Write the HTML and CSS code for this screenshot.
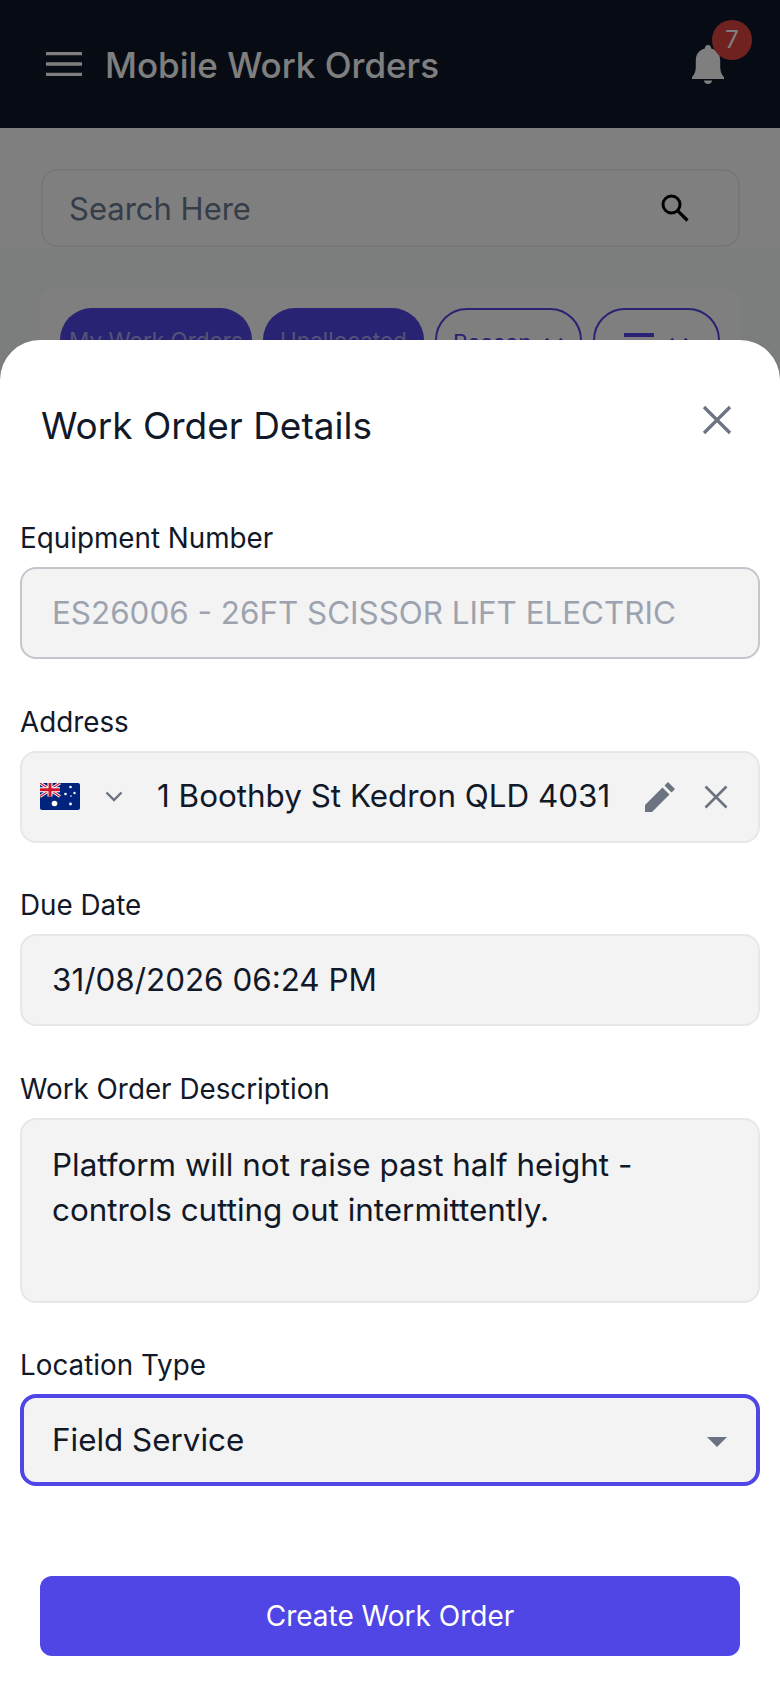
FILE: index.html
```html
<!DOCTYPE html>
<html lang="en">
<head>
<meta charset="utf-8">
<title>Mobile Work Orders</title>
<link rel="stylesheet" href="styles.css">
</head>
<body>
<div class="page">
  <header class="topbar">
    <div class="brand">
      <svg class="menu-icon" viewBox="0 0 36 24" width="36" height="24"><path d="M0 1.500h36M0 12h36M0 22.500h36" stroke="#fff" stroke-width="3.400" fill="none"/></svg>
      <span class="brand-title">Mobile Work Orders</span>
    </div>
    <div class="bell">
      <svg class="bell-icon" viewBox="0 0 32 39" width="32" height="39"><path d="M16 0c-2 0-3.200 1.500-3.200 3.600C6.600 5 3.800 9.800 3.800 16v6c0 4.500-1.600 7.800-3.800 10.200V34h32v-1.800c-2.200-2.400-3.800-5.700-3.800-10.200v-6c0-6.200-2.800-11-9-12.400C19.200 1.500 18 0 16 0zM12 35.500h8c0 2-1.800 3.500-4 3.500s-4-1.500-4-3.500z" fill="#fff"/></svg>
      <span class="badge">7</span>
    </div>
  </header>
  <section class="search-band">
    <div class="search-box">
      <span class="search-text">Search Here</span>
      <svg class="search-icon" viewBox="0 0 28 28" width="28" height="28"><circle cx="10.500" cy="10.500" r="8.500" fill="none" stroke="#000" stroke-width="3"/><path d="M16.800 16.800L26.500 26.500" stroke="#000" stroke-width="3.200" fill="none"/></svg>
    </div>
  </section>
  <section class="content">
    <div class="chip-card">
      <span class="chip chip-solid chip-a">My Work Orders</span>
      <span class="chip chip-solid chip-b">Unallocated</span>
      <span class="chip chip-line chip-c">Reason
        <svg viewBox="0 0 20 14" width="20" height="14"><path d="M2 2l8 9 8-9" fill="none" stroke="currentColor" stroke-width="3.500"/></svg>
      </span>
      <span class="chip chip-line chip-d">
        <span class="chip-bar"></span>
        <svg viewBox="0 0 20 14" width="20" height="14"><path d="M2 2l8 9 8-9" fill="none" stroke="currentColor" stroke-width="3.500"/></svg>
      </span>
    </div>
  </section>
</div>

<div class="scrim"></div>

<section class="sheet">
  <div class="sheet-head">
    <h1 class="sheet-title">Work Order Details</h1>
    <svg class="sheet-close" viewBox="0 0 30 30" width="30" height="30"><path d="M2 2l26 26M28 2L2 28" stroke="#6b7280" stroke-width="3.200" fill="none"/></svg>
  </div>
  <form class="form">
    <div class="field">
      <label class="label">Equipment Number</label>
      <div class="control control-disabled">ES26006 - 26FT SCISSOR LIFT ELECTRIC</div>
    </div>
    <div class="field">
      <label class="label">Address</label>
      <div class="control control-address">
        <svg class="flag" viewBox="0 0 40 27" width="40" height="27">
          <rect width="40" height="27" rx="2" fill="#00247d"/>
          <path d="M0 0l20 13.500M20 0L0 13.500" stroke="#fff" stroke-width="3"/>
          <path d="M0 0l20 13.500M20 0L0 13.500" stroke="#cf142b" stroke-width="1.200"/>
          <path d="M10 0v13.500M0 6.750h20" stroke="#fff" stroke-width="5"/>
          <path d="M10 0v13.500M0 6.750h20" stroke="#cf142b" stroke-width="3"/>
          <circle cx="14.500" cy="20.500" r="2.800" fill="#fff"/>
          <circle cx="30.500" cy="4" r="1.300" fill="#fff"/>
          <circle cx="25.500" cy="11" r="1.300" fill="#fff"/>
          <circle cx="34.500" cy="10" r="1.200" fill="#fff"/>
          <circle cx="30.500" cy="21" r="1.400" fill="#fff"/>
          <circle cx="31" cy="13" r=".8" fill="#fff"/>
        </svg>
        <svg class="chev" viewBox="0 0 18 11" width="18" height="11"><path d="M1.500 1.500L9 9l7.500-7.500" fill="none" stroke="#6b7280" stroke-width="2.400"/></svg>
        <span class="address-text">1 Boothby St Kedron QLD 4031</span>
        <svg class="pencil" viewBox="0 0 30 30" width="30" height="30"><path d="M0 30v-7L17.500 5.500l7 7L7 30zM19.500 3.500L23 0l7 7-3.500 3.500z" fill="#6b7280"/></svg>
        <svg class="clear" viewBox="0 0 24 24" width="24" height="24"><path d="M1.500 1.500l21 21M22.500 1.500l-21 21" stroke="#6b7280" stroke-width="2.600" fill="none"/></svg>
      </div>
    </div>
    <div class="field">
      <label class="label">Due Date</label>
      <div class="control">31/08/2026 06:24 PM</div>
    </div>
    <div class="field">
      <label class="label">Work Order Description</label>
      <div class="control control-area">Platform will not raise past half height -<br>controls cutting out intermittently.</div>
    </div>
    <div class="field">
      <label class="label">Location Type</label>
      <div class="control control-focus">
        <span>Field Service</span>
        <svg class="caret" viewBox="0 0 20 10" width="20" height="10"><path d="M0 0h20L10 10z" fill="#6b7280"/></svg>
      </div>
    </div>
  </form>
  <div class="sheet-foot">
    <button class="submit" type="button">Create Work Order</button>
  </div>
</section>
</body>
</html>
```
FILE: styles.css
```css
* { box-sizing: border-box; }
html, body { margin: 0; height: 100%; }
body {
  position: relative;
  width: 780px;
  height: 1688px;
  overflow: hidden;
  font-family: Inter, "Liberation Sans", sans-serif;
  color: #111827;
  background: #f9fafb;
}
.page { display: flex; flex-direction: column; height: 100%; }

.topbar {
  height: 128px;
  flex: none;
  background: #0f1829;
  color: #fff;
  display: flex;
  align-items: center;
  justify-content: space-between;
  padding: 0 28px 0 46px;
}
.brand { display: flex; align-items: center; gap: 23px; }
.menu-icon { display: block; }
.brand-title { font-size: 35px; font-weight: 500; line-height: 44px; margin-top: 2px; }
.bell { position: relative; width: 60px; height: 84px; align-self: flex-start; }
.bell-icon { position: absolute; left: 0; top: 45px; }
.badge {
  position: absolute;
  left: 20px;
  top: 20px;
  width: 40px;
  height: 40px;
  border-radius: 50%;
  background: #de4540;
  color: #fff;
  font-size: 24px;
  line-height: 40px;
  text-align: center;
}

.search-band { height: 120px; flex: none; background: #fff; padding: 41px 40px 0 41px; }
.search-box {
  height: 78px;
  display: flex;
  align-items: center;
  justify-content: space-between;
  padding: 0 49px 0 26px;
  border: 2px solid #eceef2;
  border-radius: 16px;
  background: #fff;
}
.search-text { font-size: 31px; color: #6b7b91; }
.search-icon { display: block; }

.content { flex: 1; padding: 41px 40px 0; background: #f9fafb; }
.chip-card {
  height: 200px;
  display: flex;
  align-items: flex-start;
  gap: 11px;
  padding: 19px 20px;
  background: #fff;
  border-radius: 12px;
}
.chip {
  height: 80px;
  border-radius: 32px;
  display: flex;
  justify-content: center;
  align-items: flex-start;
  padding-top: 17px;
  font-size: 22.500px;
  line-height: 32px;
  white-space: nowrap;
}
.chip-solid { background: #5046e5; color: #a9a6f0; }
.chip-line { border: 2px solid #5046e5; color: #5046e5; }
.chip-a { width: 192px; }
.chip-b { width: 161px; }
.chip-c { width: 147px; gap: 12px; }
.chip-d { width: 127px; gap: 15px; }
.chip svg { margin-top: 10px; }
.chip-bar { width: 30px; height: 4px; background: #5046e5; display: block; margin-top: 6px; }

.scrim { position: absolute; inset: 0; background: rgba(0, 0, 0, .5); }

.sheet {
  position: absolute;
  left: 0;
  right: 0;
  top: 340px;
  bottom: 0;
  background: #fff;
  border-radius: 40px 40px 0 0;
  display: flex;
  flex-direction: column;
}
.sheet-head {
  display: flex;
  justify-content: space-between;
  align-items: flex-start;
  height: 179px;
  flex: none;
  padding: 66px 48px 0 41px;
}
.sheet-title { margin: 0; font-size: 37px; font-weight: 400; line-height: 40px; }
.sheet-close { display: block; margin-top: -1px; }

.form { display: flex; flex-direction: column; gap: 43.500px; padding: 0 20px; }
.field { display: flex; flex-direction: column; gap: 9px; }
.label { font-size: 27.800px; line-height: 39px; }
.control {
  height: 92px;
  display: flex;
  align-items: center;
  padding: 0 30px;
  background: #f3f3f4;
  border: 2px solid #e5e7eb;
  border-radius: 16px;
  font-size: 31.400px;
  line-height: 45px;
  color: #111827;
}
.control-disabled { border-color: #c3c6cc; color: #9ca3af; }
.control-address { padding: 0 30px 0 18px; }
.flag { flex: none; display: block; }
.chev { flex: none; margin-left: 25px; }
.address-text { margin-left: 34px; flex: 1; white-space: nowrap; }
.pencil { flex: none; }
.clear { flex: none; margin-left: 29px; }
.control-area { display: block; height: 185px; padding-top: 23px; }
.control-focus { justify-content: space-between; border: 4px solid #5046e5; padding: 0 29px 0 28px; }
.caret { display: block; margin-top: 4px; }

.sheet-foot { margin-top: auto; padding: 0 40px 32px; }
.submit {
  display: block;
  width: 100%;
  height: 80px;
  border: 0;
  border-radius: 12px;
  background: #5046e5;
  color: #fff;
  font-family: inherit;
  font-size: 28px;
}
```
